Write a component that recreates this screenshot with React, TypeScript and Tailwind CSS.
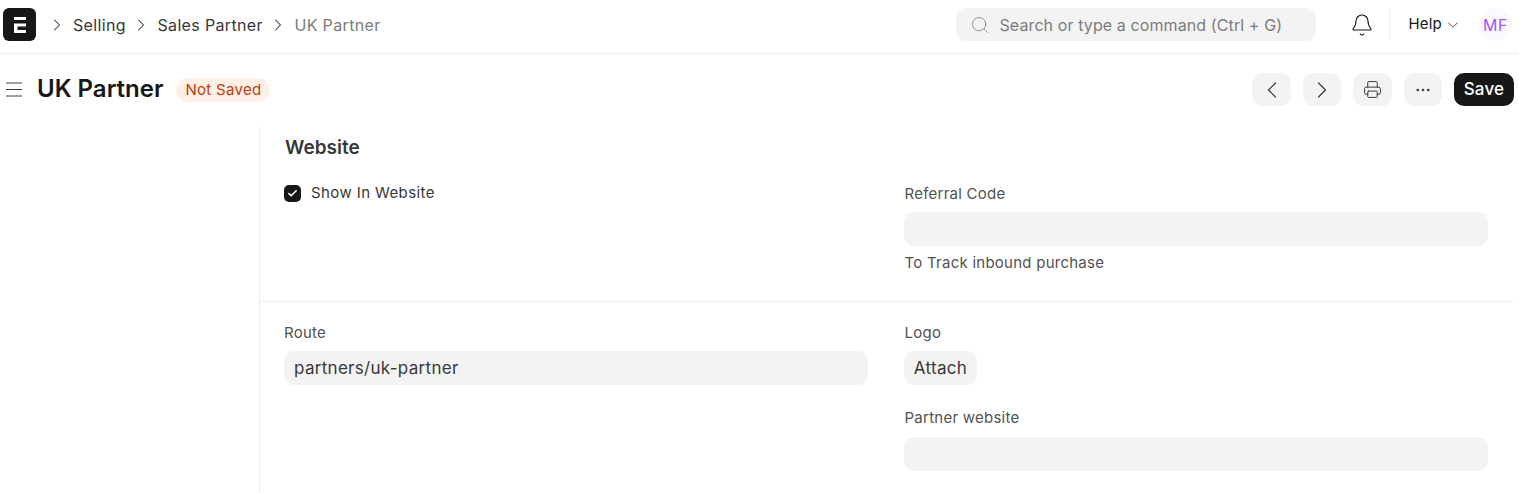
import { Bell, ChevronDown, ChevronLeft, ChevronRight, Check, Ellipsis, Printer, Search } from "lucide-react";

function Crumb({ label, muted }: { label: string; muted?: boolean }) {
  return (
    <div className="flex items-center">
      <ChevronRight size={20} strokeWidth={1.25} className="text-[#383838] mr-[6px]" />
      <span className={muted ? "text-[#7c7c7c]" : "text-[#383838]"}>{label}</span>
    </div>
  );
}

function IconButton({ children, width }: { children: React.ReactNode; width: string }) {
  return (
    <button className={`${width} h-[33px] rounded-[10px] bg-[#f3f3f3] flex items-center justify-center text-[#383838]`}>
      {children}
    </button>
  );
}

function Field({ label, value, help, right }: { label: string; value?: string; help?: string; right?: boolean }) {
  return (
    <div className="flex flex-col">
      <label className={`${right ? "pl-[0.5px]" : ""} text-[15px] leading-[20px] tracking-[0.25px] text-[#525252] mb-[8px]`}>{label}</label>
      <div className="h-[34px] rounded-[10px] bg-[#f3f3f3] px-[10px] pt-px flex items-center text-[17px] tracking-[0.3px] text-[#383838]">
        {value}
      </div>
      {help && <p className="pl-[0.5px] text-[15px] leading-[20px] tracking-[0.25px] text-[#525252] mt-[7px]">{help}</p>}
    </div>
  );
}

export default function App() {
  return (
    <div className="h-[493px] overflow-hidden bg-white font-['Inter',sans-serif]">
      <header className="h-[54px] border-b border-[#ededed] flex items-center pl-[3px] pr-[7px] pb-[4px]">
        <div className="w-[33px] h-[33px] rounded-[6px] bg-[#171717] flex items-center justify-center">
          <svg width="14" height="18" viewBox="0 0 14 18" fill="none">
            <path d="M1 1h12v3H1zM1 7.5h12v3H4.5v3.5H13v3H1z" fill="#fff" />
          </svg>
        </div>
        <nav className="flex items-center gap-[5.5px] ml-[11px] text-[16px] tracking-[0.35px]">
          <Crumb label="Selling" />
          <Crumb label="Sales Partner" />
          <Crumb label="UK Partner" muted />
        </nav>
        <div className="ml-auto w-[360px] h-[33px] rounded-[10px] bg-[#f3f3f3] flex items-center pl-[14px] gap-[9px] text-[#7c7c7c]">
          <Search size={20} strokeWidth={1} />
          <span className="text-[16px] tracking-[0.1px]">Search or type a command (Ctrl + G)</span>
        </div>
        <Bell size={24} strokeWidth={1.1} className="ml-[34px] text-[#171717]" />
        <div className="w-px h-[29px] bg-[#ededed] ml-[15px]" />
        <div className="flex items-center ml-[18px] text-[15px] tracking-[0.2px] text-[#171717]">
          Help
          <ChevronDown size={18} strokeWidth={1} className="ml-[2px]" />
        </div>
        <div className="w-[33px] h-[33px] rounded-full bg-[#fcf8ff] text-[#a855f7] text-[16px] tracking-[0.5px] flex items-center justify-center ml-[17px]">
          MF
        </div>
      </header>

      <div className="h-[73px] flex items-center pl-[6px] pr-[5px] pb-[2px]">
        <svg width="16" height="17" viewBox="0 0 16 17" fill="none" stroke="#404040" strokeWidth="1.2">
          <path d="M0 2h16M0 8.5h16M0 15h16" />
        </svg>
        <h1 className="ml-[15px] -mt-[1px] text-[24px] font-semibold text-[#171717]">UK Partner</h1>
        <span className="ml-[13px] mt-[1px] h-[24px] px-[9px] rounded-full bg-[#fff0e7] text-[#bf3d0c] text-[15px] tracking-[0.3px] flex items-center">
          Not Saved
        </span>
        <div className="ml-auto flex items-center gap-[12px]">
          <IconButton width="w-[39px]"><ChevronLeft size={28} strokeWidth={1} /></IconButton>
          <IconButton width="w-[38px]"><ChevronRight size={28} strokeWidth={1} /></IconButton>
          <IconButton width="w-[39px]"><Printer size={19} strokeWidth={1.25} /></IconButton>
          <IconButton width="w-[38px]"><Ellipsis size={18} strokeWidth={1.5} /></IconButton>
          <button className="w-[60px] h-[33px] rounded-[10px] bg-[#171717] text-white text-[17px] font-medium tracking-[0.2px]">
            Save
          </button>
        </div>
      </div>

      <main className="ml-[259px] w-[1254px] h-[366px] border-l border-[#ededed]">
        <section className="h-[175px] border-b border-[#ededed] pl-[24px] pr-[25px] pt-[9px]">
          <h2 className="pl-px text-[19px] leading-[24px] font-semibold text-[#383838]">Website</h2>
          <div className="grid grid-cols-2 gap-x-[36px] mt-[24px]">
            <div className="flex items-center h-[24px] -mt-[3px]">
              <span className="w-[17px] h-[17px] rounded-[5px] bg-[#171717] flex items-center justify-center">
                <Check size={11} strokeWidth={3.5} className="text-white" />
              </span>
              <span className="ml-[10px] text-[15px] tracking-[0.4px] text-[#383838]">Show In Website</span>
            </div>
            <Field label="Referral Code" help="To Track inbound purchase" right />
          </div>
        </section>
        <section className="grid grid-cols-2 gap-x-[36px] pl-[24px] pr-[25px] pt-[21px]">
          <Field label="Route" value="partners/uk-partner" />
          <div className="flex flex-col">
            <label className="pl-[0.5px] text-[15px] leading-[20px] tracking-[0.25px] text-[#525252] mb-[8px]">Logo</label>
            <button className="w-[73px] h-[34px] pt-px rounded-[10px] bg-[#f3f3f3] text-[17px] tracking-[0.3px] text-[#383838]">
              Attach
            </button>
            <div className="mt-[23px] pt-0 [&>div>label]:mb-[9px]">
              <Field label="Partner website" right />
            </div>
          </div>
        </section>
      </main>
    </div>
  );
}
